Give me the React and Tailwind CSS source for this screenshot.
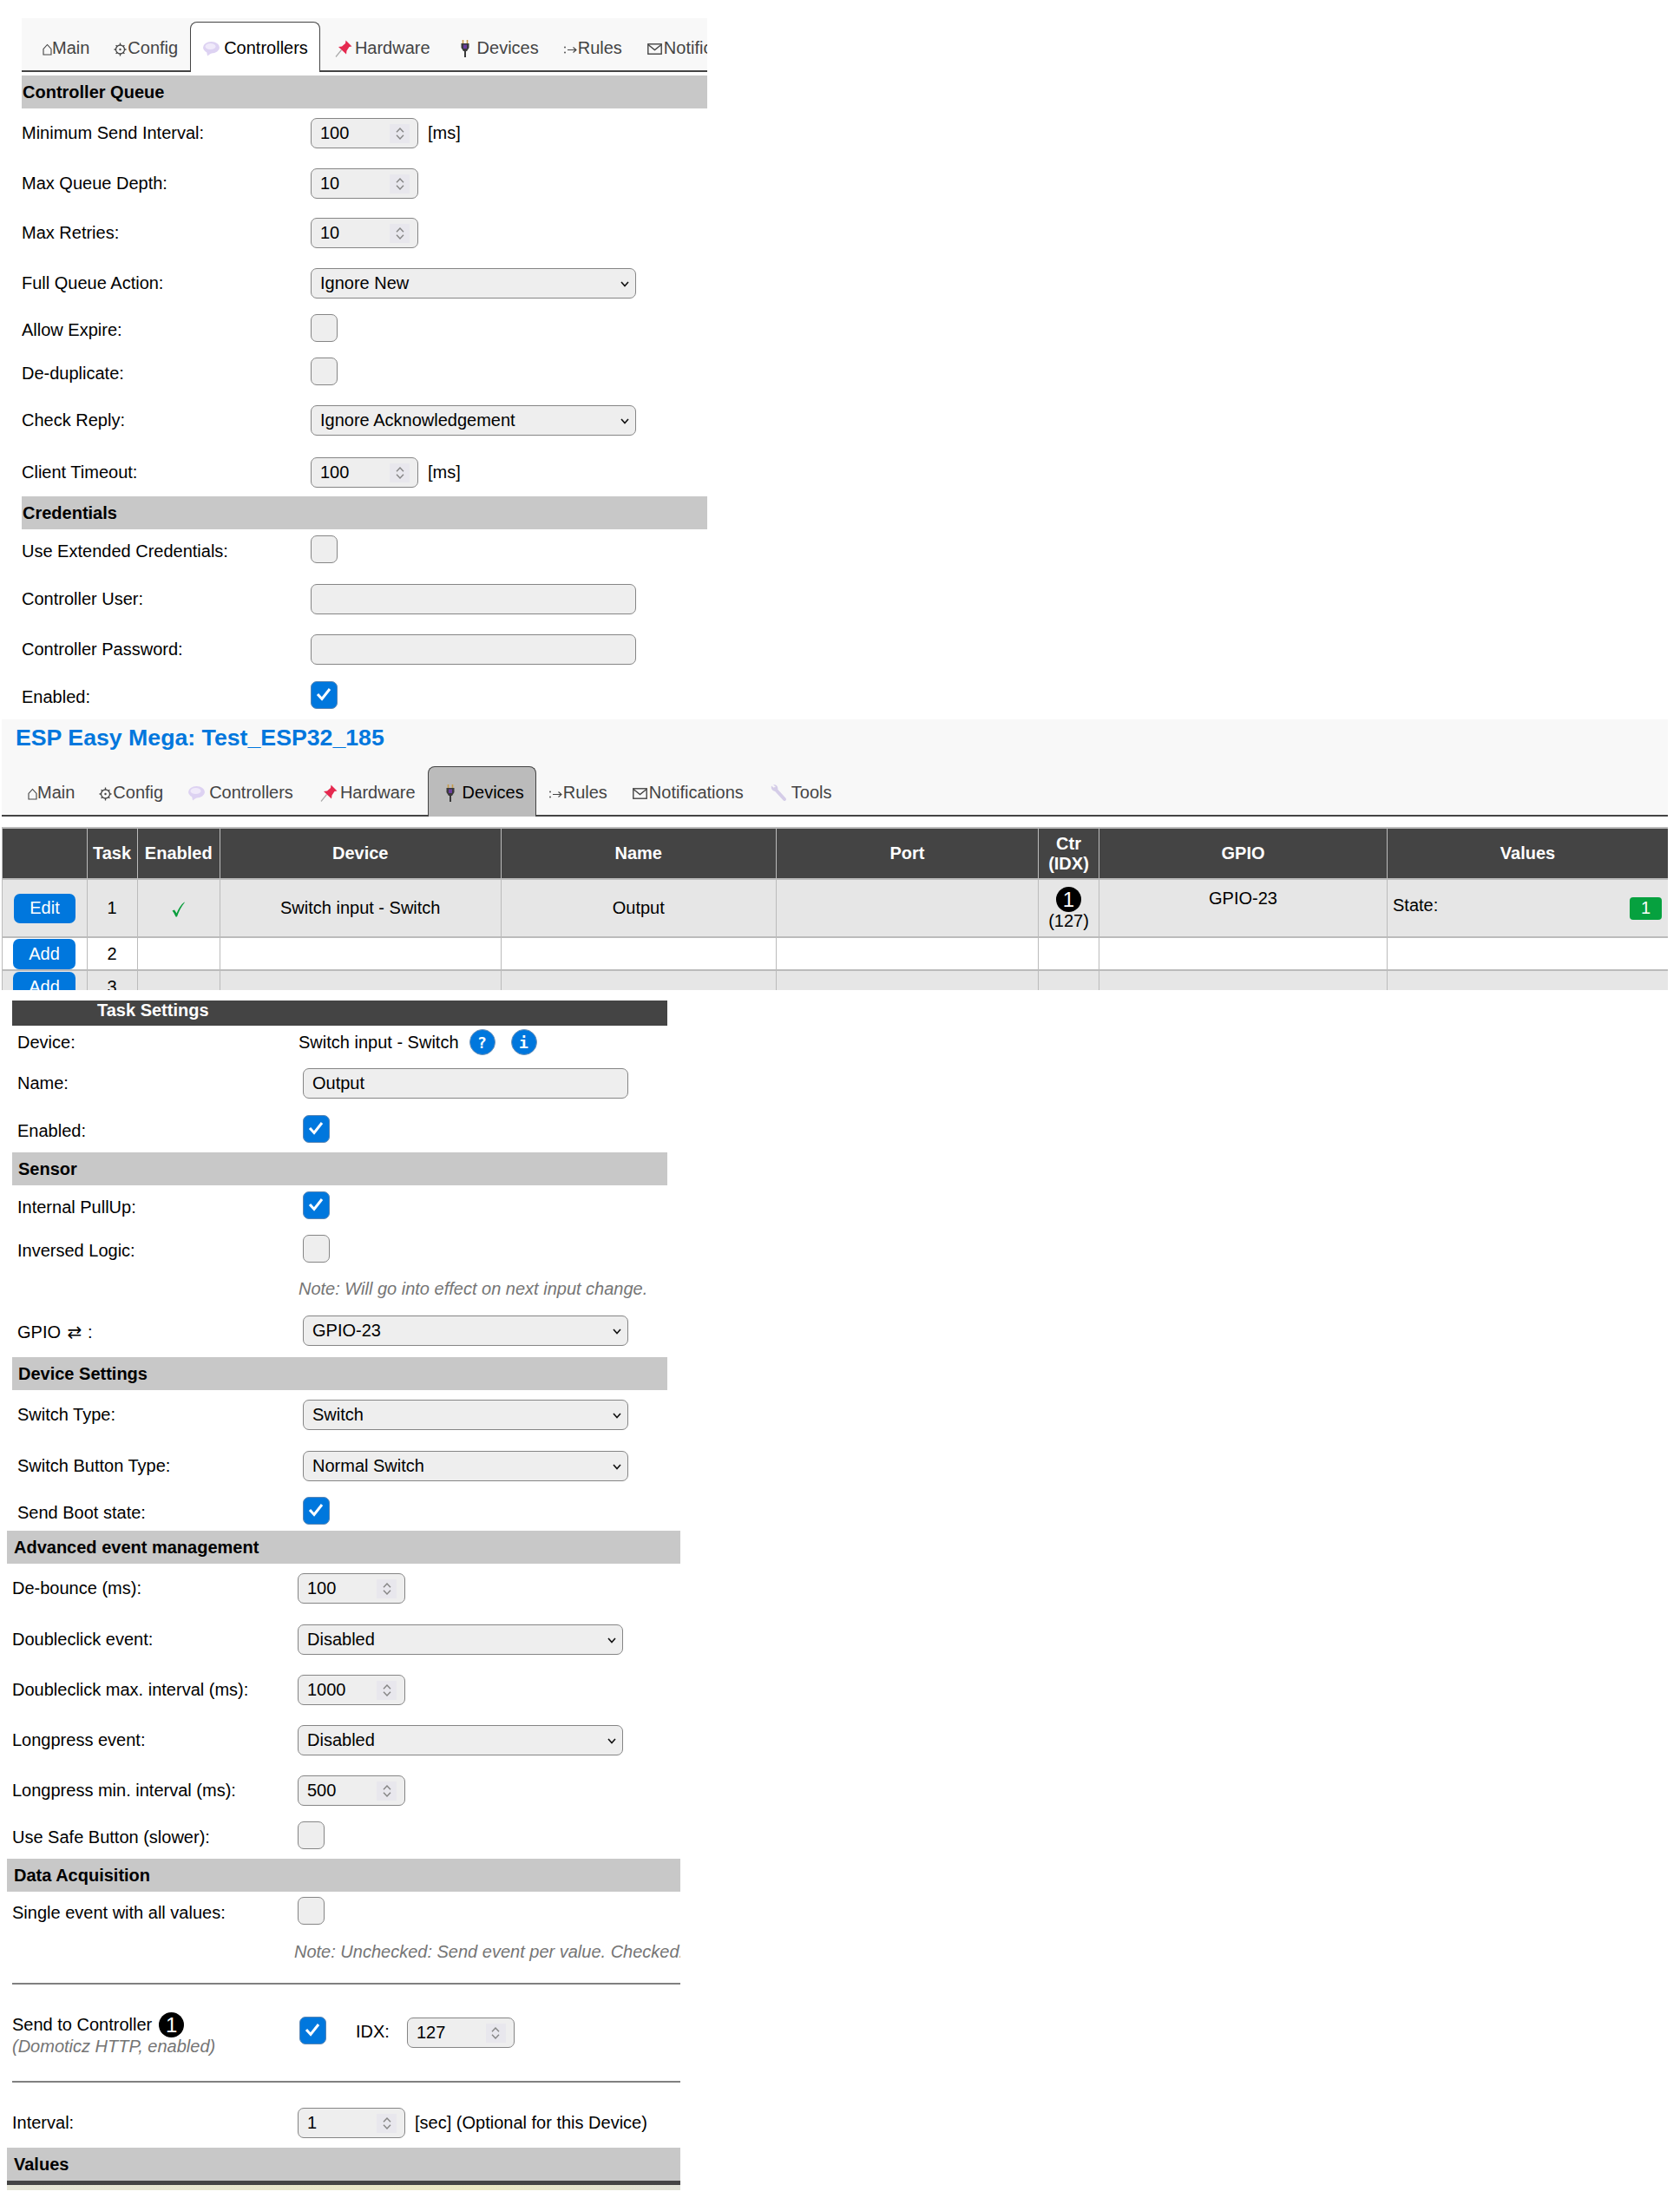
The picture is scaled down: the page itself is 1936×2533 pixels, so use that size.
import React from 'react'

function HomeIcon() {
  return (
    <svg width="11" height="14" viewBox="0 0 11 14" className="shrink-0 mt-[3px]">
      <path d="M1 13V6.5L5.5 1.5 10 6.5V13Z" fill="none" stroke="#444" strokeWidth="1.1" />
    </svg>
  )
}

function GearIcon() {
  return (
    <svg width="15" height="16" viewBox="0 0 15 16" className="shrink-0 mt-[2px]">
      <circle cx="7.5" cy="8" r="5" fill="none" stroke="#444" strokeWidth="1.3" />
      <circle cx="7.5" cy="8" r="1.2" fill="#444" />
      <path d="M7.5 0.5V3M7.5 13V15.5M0.5 8H3M12 8H14.5M2.6 3.1L4 4.5M11 11.5L12.4 12.9M12.4 3.1L11 4.5M4 11.5L2.6 12.9" stroke="#444" strokeWidth="1.3" />
    </svg>
  )
}

function BalloonIcon() {
  return (
    <svg width="19" height="17" viewBox="0 0 19 17" className="shrink-0 mt-[2px]">
      <ellipse cx="9.5" cy="6.8" rx="9.5" ry="6.8" fill="#ddd2f2" />
      <ellipse cx="8.5" cy="5.5" rx="6" ry="3.6" fill="#f0eafa" />
      <path d="M4 11 L5 16.5 L10 13Z" fill="#ddd2f2" />
    </svg>
  )
}

function PinIcon() {
  return (
    <svg width="20" height="20" viewBox="0 0 20 20" className="shrink-0">
      <path d="M1 19.5L7.5 11.5" stroke="#a9a9a9" strokeWidth="1.2" />
      <path d="M12.5 0.5L19.5 7.5 16.5 8 13.5 12.5 13 16.5 4 8 8 7.5 12 4Z" fill="#e5294f" />
    </svg>
  )
}

function PlugIcon() {
  return (
    <svg width="10" height="20" viewBox="0 0 10 20" className="shrink-0">
      <path d="M2.5 0V4M7.5 0V4" stroke="#c89b4a" strokeWidth="1.6" />
      <path d="M0.5 4H9.5V9L7 13H3L0.5 9Z" fill="#3a3a3a" />
      <path d="M3 5.5H7V10H3Z" fill="#6b3fa0" />
      <path d="M4 13H6V20H4Z" fill="#3a3a3a" />
    </svg>
  )
}

function RulesIcon() {
  return (
    <svg width="15" height="12" viewBox="0 0 15 12" className="shrink-0 mt-[3px]">
      <circle cx="1" cy="3.5" r="0.9" fill="#444" />
      <circle cx="1" cy="9.5" r="0.9" fill="#444" />
      <path d="M4 6.5H14M10.5 3.5L14 6.5 10.5 9.5" fill="none" stroke="#444" strokeWidth="1.1" />
    </svg>
  )
}

function MailIcon() {
  return (
    <svg width="17" height="13" viewBox="0 0 17 13" className="shrink-0 mt-[2px]">
      <rect x="0.8" y="0.8" width="15.4" height="11.4" fill="none" stroke="#444" strokeWidth="1.4" />
      <path d="M1 1.5L8.5 7.5 16 1.5" fill="none" stroke="#444" strokeWidth="1.4" />
    </svg>
  )
}

function WrenchIcon() {
  return (
    <svg width="19" height="20" viewBox="0 0 19 20" className="shrink-0">
      <path d="M5 5L16 17" stroke="#d5cde8" strokeWidth="4" strokeLinecap="round" />
      <path d="M1 1.5L4.5 4.5 6 3 3 0.3C6 -0.5 9.5 2 8 6.5L5.5 8C2.5 8 0 5 1 1.5Z" fill="#d5cde8" />
    </svg>
  )
}

const tabs = [
  { key: 'main', label: 'Main', icon: <HomeIcon />, cls: 'pl-[14px] pr-[12px] gap-0' },
  { key: 'config', label: 'Config', icon: <GearIcon />, cls: 'pl-[14px] pr-[13px] gap-[1px]' },
  { key: 'controllers', label: 'Controllers', icon: <BalloonIcon />, cls: 'pl-[14px] pr-[13px] gap-[5px]' },
  { key: 'hardware', label: 'Hardware', icon: <PinIcon />, cls: 'pl-[16px] pr-[13px] gap-[3px]' },
  { key: 'devices', label: 'Devices', icon: <PlugIcon />, cls: 'pl-[20px] pr-[13px] gap-[9px]' },
  { key: 'rules', label: 'Rules', icon: <RulesIcon />, cls: 'pl-[14px] pr-[13px] gap-[1px]' },
  { key: 'notifications', label: 'Notifications', icon: <MailIcon />, cls: 'pl-[14px] pr-[13px] gap-[2px]' },
  { key: 'tools', label: 'Tools', icon: <WrenchIcon />, cls: 'pl-[16px] pr-[14px] gap-[5px]' },
]

function Nav({ active, activeBg, className }) {
  return (
    <div className={`flex h-[62px] shrink-0 items-start border-b-2 border-[#444] bg-[#f8f8f8] ${className}`}>
      <div className="flex h-[60px] items-end">
        {tabs.map(tab => (
          <div
            key={tab.key}
            className={`relative flex h-[58px] shrink-0 items-center -mb-[2px] pt-[2px] rounded-t-[8px] border border-b-0 ${tab.cls} ${
              tab.key === active ? `border-[#444] text-black ${activeBg}` : 'border-transparent text-[#444]'
            }`}
          >
            {tab.icon}
            <span>{tab.label}</span>
          </div>
        ))}
      </div>
    </div>
  )
}

function Chevron({ up, className }) {
  return (
    <svg width="10" height="6" viewBox="0 0 10 6" className={className}>
      <path d={up ? 'M1 5.2L5 1 9 5.2' : 'M1 .8L5 5 9 .8'} fill="none" stroke="#858585" strokeWidth="1.4" />
    </svg>
  )
}

function NumberInput({ value, className = '' }) {
  return (
    <div className={`relative h-[35px] w-[124px] shrink-0 ${className}`}>
      <input
        type="text"
        readOnly
        value={value}
        className="h-full w-full rounded-[7px] border border-[#858585] bg-[#eee] pl-[10px] text-black outline-none"
      />
      <div className="absolute right-[10px] top-[7px] flex h-[22px] w-[23px] flex-col items-center justify-center gap-[2px] bg-[#e8e7ed]">
        <Chevron up />
        <Chevron />
      </div>
    </div>
  )
}

function Select({ value }) {
  return (
    <div className="relative h-[35px] w-[375px] shrink-0">
      <select
        defaultValue={value}
        className="h-full w-full appearance-none rounded-[7px] border border-[#858585] bg-[#eee] pl-[10px] text-black outline-none"
      >
        <option>{value}</option>
      </select>
      <svg width="10" height="7" viewBox="0 0 10 7" className="absolute right-[8px] top-[15px]">
        <path d="M1 1L5 5.5 9 1" fill="none" stroke="#111" strokeWidth="1.6" />
      </svg>
    </div>
  )
}

function TextInput({ value = '' }) {
  return (
    <input
      type="text"
      readOnly
      value={value}
      className="h-[35px] w-[375px] shrink-0 rounded-[7px] border border-[#858585] bg-[#eee] pl-[10px] text-black outline-none"
    />
  )
}

function Checkbox({ checked, className = '' }) {
  return (
    <div
      className={`h-[32px] w-[31px] shrink-0 rounded-[7px] border ${
        checked ? 'border-[#5b87b5] bg-[#0077dd]' : 'border-[#858585] bg-[#eee]'
      } ${className}`}
    >
      {checked && (
        <svg width="29" height="30" viewBox="0 0 29 30">
          <path d="M7 14L12 19.5 21 8" fill="none" stroke="#fff" strokeWidth="3" />
        </svg>
      )}
    </div>
  )
}

// one form line: label column + control
function Row({ label, children, className = '', labelClass = 'w-[335px]', labelPad = '' }) {
  return (
    <div className={`flex items-center ${className}`}>
      <div className={`shrink-0 ${labelClass} ${labelPad}`}>{label}</div>
      {children}
    </div>
  )
}

function Heading({ children, className = '' }) {
  return (
    <div className={`flex h-[38px] items-center bg-[#c8c8c8] font-bold text-black ${className}`}>
      {children}
    </div>
  )
}

function CircleOne({ className = '' }) {
  return (
    <span className={`inline-flex h-[29px] w-[29px] items-center justify-center rounded-full bg-black text-[24px] leading-none text-white ${className}`}>
      1
    </span>
  )
}

function Note({ children, className = '' }) {
  return <div className={`h-[24px] whitespace-nowrap leading-[24px] italic text-[#757575] ${className}`}>{children}</div>
}

function Hr({ className = '' }) {
  return <div className={`ml-[6px] h-[2px] bg-[#808080] ${className}`} />
}

const cols = ['w-[97.5px]', 'w-[58px]', 'w-[95.5px]', 'w-[323.5px]', 'w-[317.5px]', 'w-[302px]', 'w-[70px]', 'w-[332px]', 'w-[324px]']

const th = 'border-x border-[#bbb] font-bold text-white'
const td = 'border-x border-[#bbb] text-center p-0'

function DeviceTable() {
  return (
    <table className="w-[1920px] table-fixed border-collapse leading-[23px]">
      <colgroup>
        {cols.map(c => <col key={c} className={c} />)}
      </colgroup>
      <thead>
        <tr className="h-[59px] bg-[#444] border-y-2 border-[#bbb]">
          <th className={th}></th>
          <th className={th}>Task</th>
          <th className={th}>Enabled</th>
          <th className={th}>Device</th>
          <th className={th}>Name</th>
          <th className={th}>Port</th>
          <th className={th}>Ctr<br />(IDX)</th>
          <th className={th}>GPIO</th>
          <th className={th}>Values</th>
        </tr>
      </thead>
      <tbody>
        <tr className="h-[67px] bg-[#e6e6e6] border-b-2 border-[#bbb]">
          <td className={td}>
            <div className="ml-[13px] flex h-[34px] w-[71px] items-center justify-center rounded-[7px] bg-[#0077dd] text-white">Edit</div>
          </td>
          <td className={td}>1</td>
          <td className={td}>
            <svg width="15" height="18" viewBox="0 0 15 18" className="mx-auto mt-[3px]">
              <path d="M0.5 10.5L3 9.5 5.5 13.5C7.5 8.5 10.5 3.5 14.5 0.5L14.8 1C11 5.5 8 11.5 6 17.5H4.5C3.5 15 2 12.5 0.5 10.5Z" fill="#0a9e3c" />
            </svg>
          </td>
          <td className={td}>Switch input - Switch</td>
          <td className={td}>Output</td>
          <td className={td}></td>
          <td className={`${td} align-top pt-[8px]`}>
            <div className="flex flex-col items-center">
              <CircleOne />
              <span className="-mt-[1px]">(127)</span>
            </div>
          </td>
          <td className={`${td} align-top pt-[10px]`}>GPIO-23</td>
          <td className={td}>
            <div className="flex items-center justify-between pl-[6px] pr-[7px]">
              <span className="-mt-[6px]">State:</span>
              <span className="flex h-[26px] w-[37px] items-center justify-center rounded-[4px] bg-[#06a13f] text-white">1</span>
            </div>
          </td>
        </tr>
        <tr className="h-[38px] bg-white border-b-2 border-[#bbb]">
          <td className={td}>
            <div className="ml-[12px] flex h-[35px] w-[72px] items-center justify-center rounded-[7px] bg-[#0077dd] text-white">Add</div>
          </td>
          <td className={td}>2</td>
          <td className={td}></td>
          <td className={td}></td>
          <td className={td}></td>
          <td className={td}></td>
          <td className={td}></td>
          <td className={td}></td>
          <td className={td}></td>
        </tr>
        <tr className="h-[38px] bg-[#e6e6e6]">
          <td className={td}>
            <div className="ml-[12px] flex h-[35px] w-[72px] items-center justify-center rounded-[7px] bg-[#0077dd] text-white">Add</div>
          </td>
          <td className={td}>3</td>
          <td className={td}></td>
          <td className={td}></td>
          <td className={td}></td>
          <td className={td}></td>
          <td className={td}></td>
          <td className={td}></td>
          <td className={td}></td>
        </tr>
      </tbody>
    </table>
  )
}

function HelpDot({ children, className = '' }) {
  return (
    <span className={`flex h-[30px] w-[30px] items-center justify-center rounded-full border border-[#6f93b8] bg-[#0077dd] font-['DejaVu_Sans_Mono'] text-[18px] font-bold text-white ${className}`}>
      {children}
    </span>
  )
}

export default function App() {
  return (
    <div className="min-h-[2533px] bg-white pt-[21px] font-['Liberation_Sans',Arial,sans-serif] text-[20px] leading-[23px] text-black">
      {/* controller settings */}
      <div className="ml-[25px] w-[790px] overflow-hidden">
        <Nav active="controllers" activeBg="bg-white" className="pl-[9px]" />
        <Heading className="mt-[4px] pl-[1px]">Controller Queue</Heading>
        <Row label="Minimum Send Interval:" labelClass="w-[333px]" className="mt-[11px]">
          <NumberInput value="100" />
          <span className="ml-[11px]">[ms]</span>
        </Row>
        <Row label="Max Queue Depth:" labelClass="w-[333px]" className="mt-[23px]"><NumberInput value="10" /></Row>
        <Row label="Max Retries:" labelClass="w-[333px]" className="mt-[22px]"><NumberInput value="10" /></Row>
        <Row label="Full Queue Action:" labelClass="w-[333px]" className="mt-[23px]"><Select value="Ignore New" /></Row>
        <Row label="Allow Expire:" labelClass="w-[333px]" labelPad="pt-[4px]" className="mt-[18px]"><Checkbox /></Row>
        <Row label="De-duplicate:" labelClass="w-[333px]" labelPad="pt-[4px]" className="mt-[18px]"><Checkbox /></Row>
        <Row label="Check Reply:" labelClass="w-[333px]" className="mt-[23px]"><Select value="Ignore Acknowledgement" /></Row>
        <Row label="Client Timeout:" labelClass="w-[333px]" className="mt-[25px]">
          <NumberInput value="100" />
          <span className="ml-[11px]">[ms]</span>
        </Row>
        <Heading className="mt-[10px] pl-[1px]">Credentials</Heading>
        <Row label="Use Extended Credentials:" labelClass="w-[333px]" labelPad="pt-[4px]" className="mt-[7px]"><Checkbox /></Row>
        <Row label="Controller User:" labelClass="w-[333px]" className="mt-[24px]"><TextInput /></Row>
        <Row label="Controller Password:" labelClass="w-[333px]" className="mt-[23px]"><TextInput /></Row>
        <Row label="Enabled:" labelClass="w-[333px]" labelPad="pt-[4px]" className="mt-[19px]"><Checkbox checked /></Row>
      </div>

      {/* device list */}
      <div className="ml-[2px] mt-[12px] h-[312px] w-[1920px] overflow-hidden">
        <div className="h-[50px] bg-[#f8f8f8] pt-[4px] pl-[16px]">
          <h1 className="text-[26.7px] font-bold leading-[34px] text-[#0077dd]">ESP Easy Mega: Test_ESP32_185</h1>
        </div>
        <Nav active="devices" activeBg="bg-[#bbb]" className="pl-[15px]" />
        <div className="mt-[12px]">
          <DeviceTable />
        </div>
      </div>

      {/* task settings, upper part */}
      <div className="ml-[14px] mt-[12px] w-[755px]">
        <div className="h-[29px] overflow-hidden bg-[#444] pl-[98px] font-bold leading-[22px] text-white">Task Settings</div>
        <Row label="Device:" labelPad="pl-[6px]" className="mt-[4px] h-[30px]">
          <span className="-ml-[5px] mr-[12px]">Switch input - Switch</span>
          <HelpDot className="mr-[18px]">?</HelpDot>
          <HelpDot>i</HelpDot>
        </Row>
        <Row label="Name:" labelPad="pl-[6px]" className="mt-[15px]"><TextInput value="Output" /></Row>
        <Row label="Enabled:" labelPad="pl-[6px] pt-[4px]" className="mt-[19px]"><Checkbox checked /></Row>
        <Heading className="mt-[11px] pl-[7px]">Sensor</Heading>
        <Row label="Internal PullUp:" labelPad="pl-[6px] pt-[4px]" className="mt-[7px]"><Checkbox checked /></Row>
        <Row label="Inversed Logic:" labelPad="pl-[6px] pt-[4px]" className="mt-[18px]"><Checkbox /></Row>
        <Row label="" labelPad="pl-[6px]" labelClass="w-[330px]" className="mt-[18px]"><Note>Note: Will go into effect on next input change.</Note></Row>
        <Row
          label={<>GPIO <span className="ml-[2px] mr-[1px] font-['DejaVu_Sans'] text-[20px] leading-none">⇄</span> :</>}
          labelPad="pl-[6px] pt-[4px]"
          className="mt-[19px]"
        >
          <Select value="GPIO-23" />
        </Row>
        <Heading className="mt-[13px] pl-[7px]">Device Settings</Heading>
        <Row label="Switch Type:" labelPad="pl-[6px]" className="mt-[11px]"><Select value="Switch" /></Row>
        <Row label="Switch Button Type:" labelPad="pl-[6px]" className="mt-[24px]"><Select value="Normal Switch" /></Row>
        <Row label="Send Boot state:" labelPad="pl-[6px] pt-[4px]" className="mt-[18px]"><Checkbox checked /></Row>
      </div>

      {/* task settings, lower part */}
      <div className="ml-[8px] mt-[7px] w-[776px] overflow-hidden">
        <Heading className="pl-[8px]">Advanced event management</Heading>
        <Row label="De-bounce (ms):" labelPad="pl-[6px]" className="mt-[11px]"><NumberInput value="100" /></Row>
        <Row label="Doubleclick event:" labelPad="pl-[6px]" className="mt-[24px]"><Select value="Disabled" /></Row>
        <Row label="Doubleclick max. interval (ms):" labelPad="pl-[6px]" className="mt-[23px]"><NumberInput value="1000" /></Row>
        <Row label="Longpress event:" labelPad="pl-[6px]" className="mt-[23px]"><Select value="Disabled" /></Row>
        <Row label="Longpress min. interval (ms):" labelPad="pl-[6px]" className="mt-[23px]"><NumberInput value="500" /></Row>
        <Row label="Use Safe Button (slower):" labelPad="pl-[6px] pt-[4px]" className="mt-[18px]"><Checkbox /></Row>
        <Heading className="mt-[11px] pl-[8px]">Data Acquisition</Heading>
        <Row label="Single event with all values:" labelPad="pl-[6px] pt-[4px]" className="mt-[6px]"><Checkbox /></Row>
        <Row label="" labelClass="w-[331px]" className="mt-[19px]"><Note>Note: Unchecked: Send event per value. Checked.</Note></Row>
        <Hr className="mt-[24px]" />
        <div className="mt-[32px] flex h-[51px] items-start">
          <div className="w-[337px] shrink-0 pl-[6px]">
            <div className="flex items-center gap-[8px] leading-[29px]">
              Send to Controller <CircleOne />
            </div>
            <div className="mt-[-1px] leading-[23px] italic text-[#757575]">(Domoticz HTTP, enabled)</div>
          </div>
          <Checkbox checked className="mt-[5px]" />
          <span className="ml-[34px] mr-[20px] mt-[11px]">IDX:</span>
          <NumberInput value="127" className="mt-[6px]" />
        </div>
        <Hr className="mt-[28px]" />
        <Row label="Interval:" labelPad="pl-[6px]" className="mt-[29px]">
          <NumberInput value="1" />
          <span className="ml-[11px]">[sec] (Optional for this Device)</span>
        </Row>
        <Heading className="mt-[11px] pl-[8px]">Values</Heading>
        <div className="h-[5px] bg-[#444]" />
        <div className="h-[6px] bg-linear-to-r from-[#e4e4d6] via-[#ebe8c2] via-70% to-[#dfe0d6]" />
      </div>
    </div>
  )
}
